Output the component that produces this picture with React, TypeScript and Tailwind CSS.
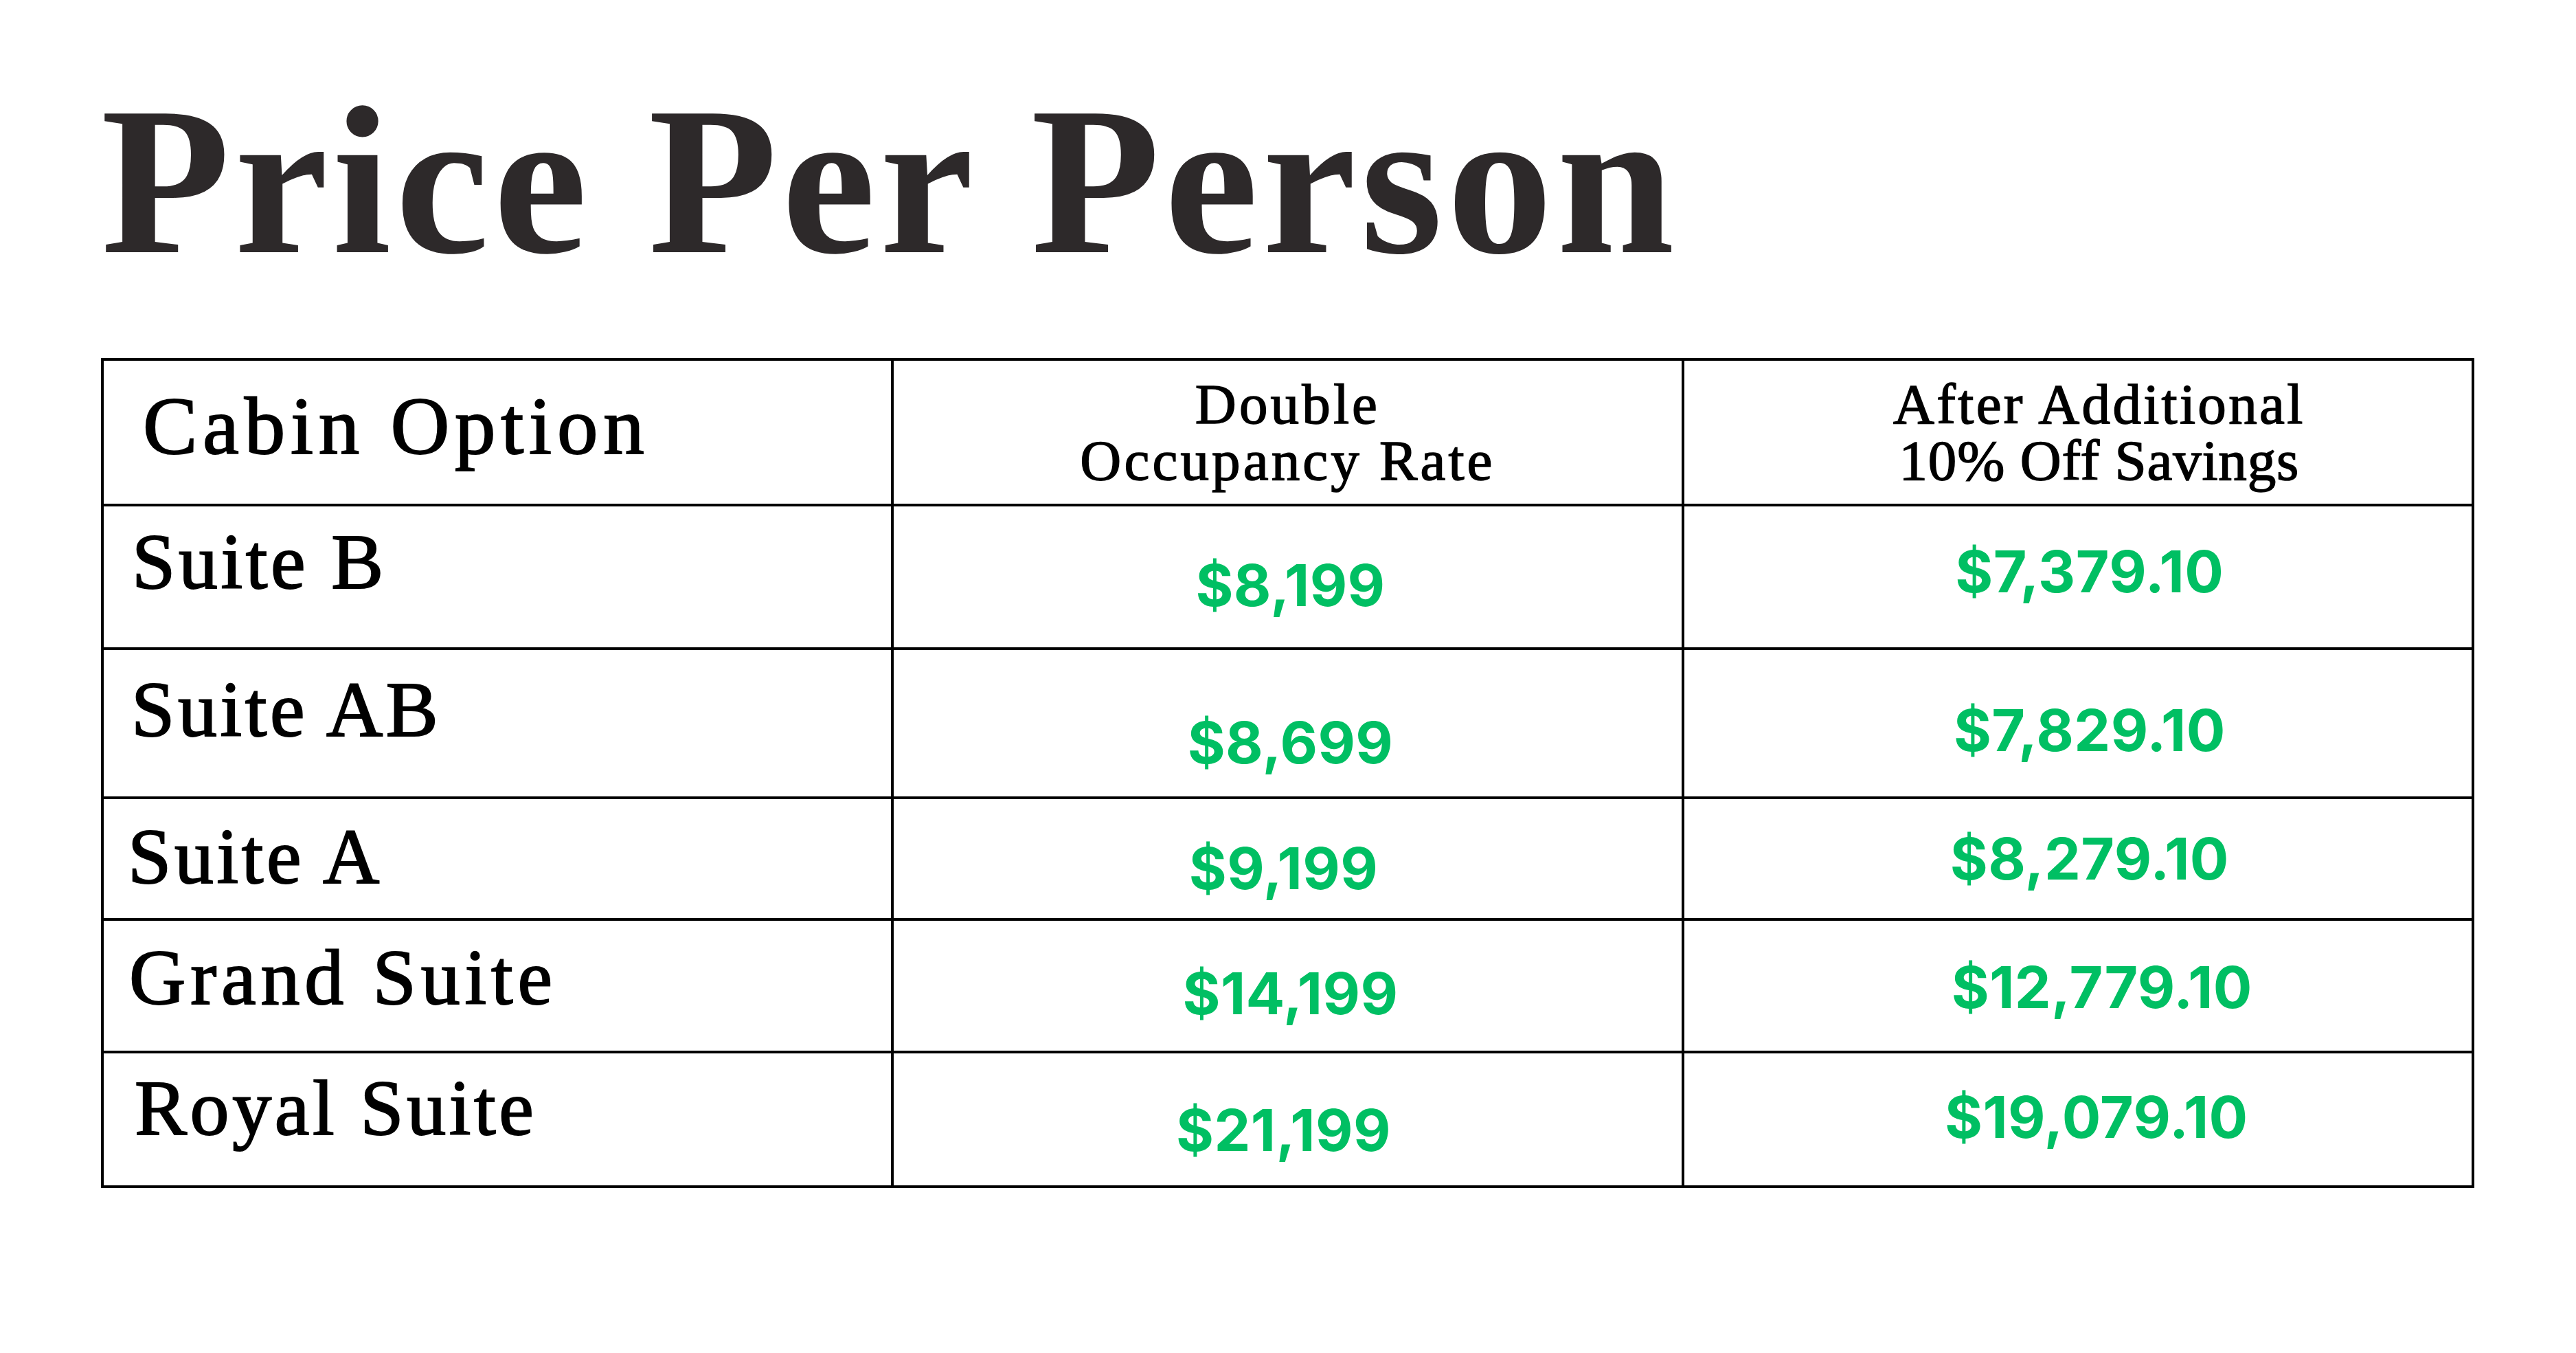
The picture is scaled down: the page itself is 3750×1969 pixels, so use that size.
import React from "react";

interface Row {
  cabin: string;
  cabinClass: string;
  rate: string;
  rateClass: string;
  savings: string;
  savingsClass: string;
}

const serif = "font-['Liberation_Serif','Times_New_Roman',serif]";
const heavy = "[-webkit-text-stroke:2px_black]";
const price =
  "font-['Inter','Liberation_Sans',sans-serif] font-bold text-[84px] leading-none text-[#00bf63] tracking-[0.005em]";

const rows: Row[] = [
  {
    cabin: "Suite B",
    cabinClass: "pl-[41px] pb-[44px] tracking-[0.04em]",
    rate: "$8,199",
    rateClass: "pl-[8px] pt-[24px]",
    savings: "$7,379.10",
    savingsClass: "pl-[34px] pb-[16px]",
  },
  {
    cabin: "Suite AB",
    cabinClass: "pl-[40px] pb-[40px] tracking-[0.04em]",
    rate: "$8,699",
    rateClass: "pl-[8px] pt-[56px]",
    savings: "$7,829.10",
    savingsClass: "pl-[34px] pt-[20px]",
  },
  {
    cabin: "Suite A",
    cabinClass: "pl-[35px] pb-[6px] tracking-[0.04em]",
    rate: "$9,199",
    rateClass: "pr-[12px] pt-[28px]",
    savings: "$8,279.10",
    savingsClass: "pl-[34px]",
  },
  {
    cabin: "Grand Suite",
    cabinClass: "pl-[37px] pb-[24px] tracking-[0.06em]",
    rate: "$14,199",
    rateClass: "pl-[8px] pt-[22px]",
    savings: "$12,779.10",
    savingsClass: "pl-[70px] pt-[4px]",
  },
  {
    cabin: "Royal Suite",
    cabinClass: "pl-[45px] pb-[32px] tracking-[0.04em]",
    rate: "$21,199",
    rateClass: "pr-[12px] pt-[32px]",
    savings: "$19,079.10",
    savingsClass: "pl-[54px] pb-[6px]",
  },
];

const App = () => {
  return (
    <div className="w-[3750px] h-[1969px] bg-white pl-[147px] pt-[110px]">
      <h1
        className={`${serif} font-bold text-[308px] leading-none text-[#2d292a] tracking-[6px]`}
      >
        Price Per Person
      </h1>

      <div className="mt-[103px] w-[3455px] grid grid-cols-3 grid-rows-[208px_205px_213px_173px_189px_192px] gap-[4px] p-[4px] bg-black">
        <div
          className={`bg-white flex items-center pl-[57px] pb-[18px] ${serif} ${heavy} text-[119px] leading-none text-black tracking-[0.065em]`}
        >
          Cabin Option
        </div>
        <div
          className={`bg-white flex flex-col items-center justify-center ${serif} [-webkit-text-stroke:1.5px_black] text-[83px] leading-[82px] text-black tracking-[0.05em]`}
        >
          <span>Double</span>
          <span>Occupancy Rate</span>
        </div>
        <div
          className={`bg-white flex flex-col items-center justify-center pl-[62px] ${serif} [-webkit-text-stroke:1.5px_black] text-[83px] leading-[82px] text-black`}
        >
          <span className="tracking-[0.04em]">After Additional</span>
          <span className="tracking-[0.01em]">10% Off Savings</span>
        </div>

        {rows.map((row) => (
          <React.Fragment key={row.cabin}>
            <div
              className={`bg-white flex items-center ${row.cabinClass} ${serif} ${heavy} text-[114px] leading-none text-black`}
            >
              {row.cabin}
            </div>
            <div
              className={`bg-white flex items-center justify-center ${row.rateClass} ${price}`}
            >
              {row.rate}
            </div>
            <div
              className={`bg-white flex items-center justify-center ${row.savingsClass} ${price}`}
            >
              {row.savings}
            </div>
          </React.Fragment>
        ))}
      </div>
    </div>
  );
};

export default App;
